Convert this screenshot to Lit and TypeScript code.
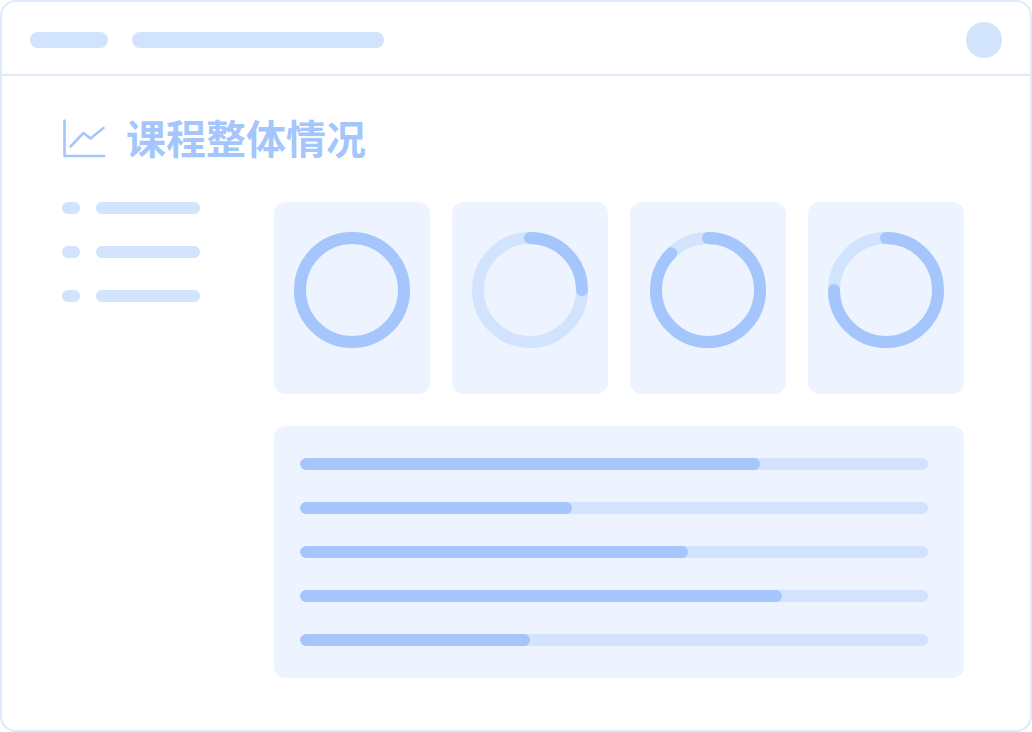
import { LitElement, html, css, svg } from "lit";
import { customElement } from "lit/decorators.js";

const RINGS = [100, 25, 87.5, 75];
const BARS = [460, 272, 388, 482, 230];
const BAR_TRACK = 628;

@customElement("app-root")
export class AppRoot extends LitElement {
  static styles = css`
    :host {
      display: block;
      width: 1032px;
      height: 732px;
      background: #ffffff;
    }
    .window {
      box-sizing: border-box;
      width: 1032px;
      height: 732px;
      border: 2px solid #dfeaf9;
      border-radius: 16px;
      background: #ffffff;
      overflow: hidden;
      display: flex;
      flex-direction: column;
    }
    .header {
      box-sizing: border-box;
      flex: none;
      height: 74px;
      border-bottom: 2px solid #dfeaf9;
      display: flex;
      align-items: center;
      gap: 24px;
      padding: 4px 28px 0;
    }
    .pill {
      height: 16px;
      border-radius: 8px;
      background: #d2e3fd;
    }
    .pill.short { width: 78px; }
    .pill.long { width: 252px; }
    .avatar {
      width: 36px;
      height: 36px;
      border-radius: 50%;
      background: #d2e3fd;
      margin-left: auto;
    }
    .body {
      flex: 1;
      padding: 40px 66px 0 60px;
    }
    .title {
      display: flex;
      align-items: center;
      gap: 22px;
      height: 46px;
      margin-bottom: 40px;
    }
    .title svg { display: block; flex: none; }
    .title h1 {
      margin: 0 0 4px -2px;
      font: 700 40px/46px "Noto Sans CJK SC", "Noto Sans", sans-serif;
      color: #a5c6fc;
      white-space: nowrap;
    }
    .columns {
      display: flex;
      gap: 74px;
    }
    .side {
      flex: none;
      width: 138px;
      display: flex;
      flex-direction: column;
      gap: 32px;
    }
    .side-row {
      display: flex;
      gap: 16px;
    }
    .dot, .line {
      height: 12px;
      border-radius: 6px;
      background: #d2e3fd;
    }
    .dot { width: 18px; }
    .line { width: 104px; }
    .main {
      flex: 1;
      display: flex;
      flex-direction: column;
      gap: 32px;
    }
    .cards {
      display: flex;
      gap: 22px;
    }
    .card {
      box-sizing: border-box;
      width: 156px;
      height: 192px;
      padding-top: 30px;
      border-radius: 12px;
      background: #edf3ff;
      display: flex;
      justify-content: center;
      align-items: flex-start;
    }
    .card svg { display: block; }
    .track-ring { fill: none; stroke: #d2e3fd; stroke-width: 12; }
    .value-ring { fill: none; stroke: #a5c6fc; stroke-width: 12; stroke-linecap: round; }
    .panel {
      box-sizing: border-box;
      height: 252px;
      padding: 32px 36px 0 26px;
      border-radius: 12px;
      background: #edf3ff;
      display: flex;
      flex-direction: column;
      gap: 32px;
    }
    .bar {
      height: 12px;
      border-radius: 6px;
      background: #d2e3fd;
      overflow: hidden;
    }
    .bar-fill {
      height: 100%;
      border-radius: 6px;
      background: #a5c6fc;
    }
  `;

  private ring(value: number) {
    return svg`
      <svg width="116" height="116" viewBox="0 0 116 116">
        <circle class="track-ring" cx="58" cy="58" r="52"></circle>
        ${value >= 100
          ? svg`<circle class="value-ring" cx="58" cy="58" r="52"></circle>`
          : svg`<circle class="value-ring" cx="58" cy="58" r="52" pathLength="100"
              stroke-dasharray="${value} ${100 - value}"
              transform="rotate(-90 58 58)"></circle>`}
      </svg>`;
  }

  render() {
    return html`
      <div class="window">
        <div class="header">
          <div class="pill short"></div>
          <div class="pill long"></div>
          <div class="avatar"></div>
        </div>
        <div class="body">
          <div class="title">
            <svg width="44" height="40" viewBox="0 0 44 40" fill="none" stroke="#a5c6fc" stroke-width="2.6" stroke-linecap="round" stroke-linejoin="round">
              <path d="M2.5 1.5v35.500h39.500"></path>
              <path d="M8.500 27.500 21.500 14l7 5.500L41.500 9"></path>
            </svg>
            <h1>课程整体情况</h1>
          </div>
          <div class="columns">
            <div class="side">
              ${[0, 1, 2].map(
                () => html`<div class="side-row"><div class="dot"></div><div class="line"></div></div>`
              )}
            </div>
            <div class="main">
              <div class="cards">
                ${RINGS.map((v) => html`<div class="card">${this.ring(v)}</div>`)}
              </div>
              <div class="panel">
                ${BARS.map(
                  (w) => html`<div class="bar"><div class="bar-fill" style="width:${(w / BAR_TRACK) * 100}%"></div></div>`
                )}
              </div>
            </div>
          </div>
        </div>
      </div>
    `;
  }
}
